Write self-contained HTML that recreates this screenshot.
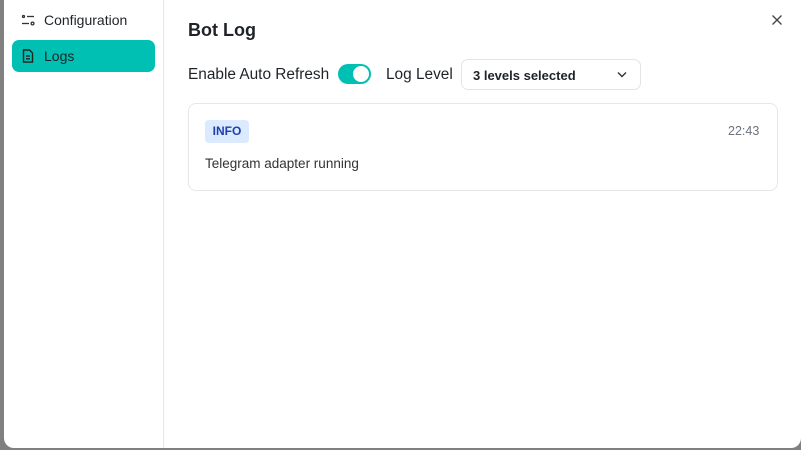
<!DOCTYPE html>
<html><head><style>
*{box-sizing:border-box;margin:0;padding:0}
body{width:801px;height:450px;background:#808080;font-family:"Liberation Sans",sans-serif;position:relative;overflow:hidden;color:#1f2328}
.modal{position:absolute;left:4px;top:-10px;width:797px;height:458px;background:#fff;border-radius:10px;overflow:hidden}
.side{position:absolute;left:0;top:0;width:160px;height:100%;border-right:1px solid #e5e7eb}
.item{position:absolute;left:8px;width:143px;height:32px;border-radius:7px;font-size:14px;display:flex;align-items:center;padding-left:9px;gap:9px}
.abs{position:absolute}
</style></head><body>
<div class="modal">
<div class="side">
 <div class="item" style="top:14px">
  <svg width="14" height="14" viewBox="0 0 14 14" fill="none" stroke="#333" stroke-width="1.3"><circle cx="2.5" cy="3.5" r="1"/><line x1="6" y1="3.5" x2="13" y2="3.5"/><line x1="1" y1="10.5" x2="8" y2="10.5"/><circle cx="11.5" cy="10.5" r="1.4"/></svg>
  <span>Configuration</span></div>
 <div class="item" style="top:50px;background:#00bfb3">
  <svg width="14" height="14" viewBox="0 0 14 14" fill="none" stroke="#222" stroke-width="1.4"><path d="M2.5 1h6l3 3v9h-9z"/><line x1="5" y1="7" x2="9" y2="7"/><line x1="5" y1="9.8" x2="9" y2="9.8"/></svg>
  <span>Logs</span></div>
</div>
<div class="abs" style="left:184px;top:30px;font-size:18px;font-weight:bold">Bot Log</div>
<svg class="abs" style="left:768px;top:25px" width="10" height="10" viewBox="0 0 10 10" stroke="#444" stroke-width="1.3"><line x1="0.5" y1="0.5" x2="9.5" y2="9.5"/><line x1="9.5" y1="0.5" x2="0.5" y2="9.5"/></svg>
<div class="abs" style="left:184px;top:76px;font-size:15.4px">Enable Auto Refresh</div>
<div class="abs" style="left:334px;top:74px;width:33px;height:20px;border-radius:10px;background:#00bfb3"><div style="position:absolute;right:2px;top:2px;width:16px;height:16px;border-radius:50%;background:#fff"></div></div>
<div class="abs" style="left:382px;top:76px;font-size:15.4px">Log Level</div>
<div class="abs" style="left:457px;top:69px;width:180px;height:31px;border:1px solid #e2e4e8;border-radius:7px;font-size:13px;font-weight:bold;padding:8px 0 0 11px">3 levels selected
 <svg style="position:absolute;right:13px;top:11px" width="10" height="7" viewBox="0 0 10 7" fill="none" stroke="#333" stroke-width="1.4"><path d="M1 1.5l4 4 4-4"/></svg></div>
<div class="abs" style="left:184px;top:113px;width:590px;height:88px;border:1px solid #e5e7eb;border-radius:8px"></div>
<div class="abs" style="left:201px;top:130px;width:44px;height:23px;border-radius:4px;background:#dbeafe;color:#1e40af;font-size:12px;font-weight:bold;text-align:center;line-height:23px">INFO</div>
<div class="abs" style="left:724px;top:134px;font-size:12.5px;color:#6b7280">22:43</div>
<div class="abs" style="left:201px;top:166px;font-size:13.5px;color:#333">Telegram adapter running</div>
</div>
</body></html>
